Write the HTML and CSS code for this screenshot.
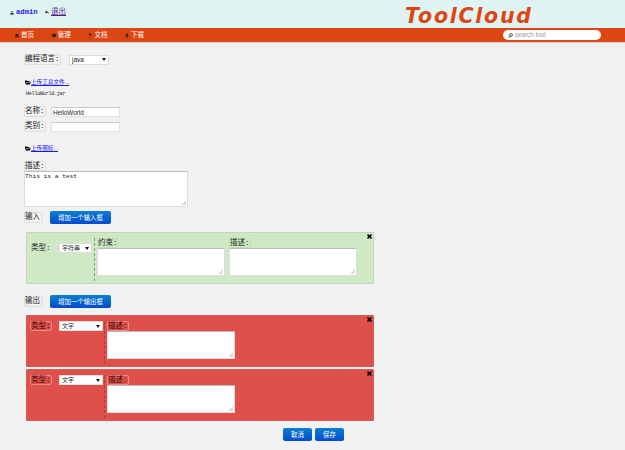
FILE: index.html
```html
<!DOCTYPE html>
<html>
<head>
<meta charset="utf-8">
<title>ToolCloud</title>
<link rel="stylesheet" href="styles.css">
</head>
<body>
<svg class="defs" width="0" height="0">
  <symbol id="folder" viewBox="0 0 12 10"><path d="M0 8V1h4l1 1h4v2H3z M3.5 5H12L9.5 9H1z"/></symbol>
  <symbol id="close" viewBox="0 0 10 10"><path d="M0 2L2 0l3 2.500L8 0l2 2-2.500 3L10 8l-2 2-3-2.500L2 10 0 8l2.500-3z"/></symbol>
</svg>
<header class="top">
  <div class="account">
    <svg class="icon" viewBox="0 0 10 10"><path d="M3 1h4v4l-1 1 4 2v2H0V8l4-2-1-1z M4 2v3l1 1 1-1V2z" fill-rule="evenodd"/></svg>
    <a class="user" href="#">admin</a>
    <svg class="icon back" viewBox="0 0 10 10"><path d="M0 4l4-4v2.500c4 0 6 2 5 7-1-3-2-4-5-4V8z"/></svg>
    <a class="logout" href="#">退出</a>
  </div>
  <div class="brand">ToolCloud</div>
</header>
<nav class="nav">
  <a href="#"><svg class="icon" viewBox="0 0 10 10"><path d="M5 0l5 5H9v5H6V7H4v3H1V5H0z"/></svg>首页</a>
  <a href="#"><svg class="icon" viewBox="0 0 10 10"><path d="M1 1h8v8H1z M0 4h10v2H0z M4 0h2v10H4z"/></svg>管理</a>
  <a href="#"><svg class="icon" viewBox="0 0 10 10"><path d="M1 3c0-4 8-4 8 0 0 2-3 2-3 4H4c0-3 2-2 2-4 0-1-2-1-2 0z M4 8h2v2H4z"/></svg>文档</a>
  <a href="#"><svg class="icon" viewBox="0 0 10 10"><path d="M3 0h4v4h2L5 8 1 4h2z M1 8h8v2H1z"/></svg>下载</a>
  <div class="search">
    <svg viewBox="0 0 10 10"><path d="M5 6L1 9.500" stroke-width="2"/><circle cx="6.200" cy="3.800" r="2.800"/></svg>
    <span>search tool</span>
  </div>
</nav>
<main class="form">
  <div class="row language"><span class="label">编程语言:</span><span class="select">java</span></div>
  <div class="row upload"><svg><use href="#folder"/></svg><a href="#">上传工具文件...</a></div>
  <div class="filename">HelloWorld.jar</div>
  <div class="row field"><span class="label">名称:</span><span class="input">HelloWorld</span></div>
  <div class="row field"><span class="label">类别:</span><span class="input"></span></div>
  <div class="row upload image"><svg><use href="#folder"/></svg><a href="#">上传图标...</a></div>
  <div class="about"><span class="label">描述:</span><div class="textarea">This is a test</div></div>
  <div class="row add"><span class="label">输入</span><span class="button">增加一个输入框</span></div>
  <section class="panel green">
    <div class="type"><span class="label">类型:</span><span class="select">字符串</span></div>
    <div class="part"><span class="label">约束:</span><div class="textarea"></div></div>
    <div class="part"><span class="label">描述:</span><div class="textarea"></div></div>
    <svg class="close"><use href="#close"/></svg>
  </section>
  <div class="row add"><span class="label">输出</span><span class="button">增加一个输出框</span></div>
  <section class="panel red">
    <div class="type"><span class="label">类型:</span><span class="select">文字</span></div>
    <div class="part"><span class="label">描述:</span><div class="textarea"></div></div>
    <svg class="close"><use href="#close"/></svg>
  </section>
  <section class="panel red">
    <div class="type"><span class="label">类型:</span><span class="select">文字</span></div>
    <div class="part"><span class="label">描述:</span><div class="textarea"></div></div>
    <svg class="close"><use href="#close"/></svg>
  </section>
  <div class="actions"><span class="button">取消</span><span class="button">保存</span></div>
</main>
</body>
</html>
```
FILE: styles.css
```css
* { box-sizing: border-box; }
body {
  margin: 0;
  height: 450px;
  overflow: hidden;
  background: #f1f1f1;
  color: #222;
  font: 7.500px/10px "Liberation Sans", "Noto Sans CJK SC", sans-serif;
  white-space: nowrap;
}
.defs { display: block; }
a { color: #1a1aee; }
.top {
  display: flex;
  height: 28px;
  background: #e0f3f3;
}
.account {
  display: flex;
  align-items: center;
  width: 405px;
  padding: 0 0 4px 10px;
}
.icon { width: 4px; height: 5px; fill: #222; }
.user {
  width: 29px;
  margin-left: 2px;
  font: bold 7.200px/10px "Liberation Mono", monospace;
  text-decoration: none;
}
.logout { margin-left: 2px; color: #551a8b; }
.brand {
  padding-top: 4px;
  color: #dc4612;
  font: italic bold 20.500px/24px "DejaVu Sans", sans-serif;
  letter-spacing: 1.750px;
}
.nav {
  display: flex;
  align-items: center;
  height: 14px;
  padding-left: 15px;
  background: #dc4612;
  box-shadow: 0 1px 1px #cfcfcf;
}
.nav a {
  display: flex;
  align-items: center;
  gap: 2px;
  width: 36.700px;
  color: #fff;
  font-size: 6.500px;
  text-decoration: none;
}
.search {
  display: flex;
  align-items: center;
  gap: 2px;
  width: 98px;
  height: 10px;
  margin-left: 341px;
  padding-left: 5px;
  border-radius: 5px;
  background: #fff;
  color: #999;
  font-size: 6.300px;
}
.search svg { width: 5px; height: 5px; fill: none; stroke: #222; stroke-width: 1.500; }
.form { padding: 12px 0 0 24px; }
.row { display: flex; align-items: center; height: 11px; }
.label {
  display: inline-block;
  height: 11px;
  border: 1px solid #dedede;
  border-radius: 2px;
  font-family: "Liberation Mono", "Noto Sans CJK SC", monospace;
  line-height: 9px;
}
.language .label { width: 37px; }
.select {
  display: flex;
  align-items: center;
  justify-content: space-between;
  height: 10px;
  padding: 0 2px;
  border: 1px solid #ddd;
  background: #fff;
  font-size: 6px;
  line-height: 8px;
}
.select::after {
  content: "";
  border: 2px solid transparent;
  border-top: 3px solid #111;
  border-bottom: 0;
}
.language .select { width: 40px; margin-left: 8px; font-size: 6.500px; }
.upload { height: 10px; margin-top: 12px; font-size: 5.600px; }
.upload svg { width: 6px; height: 5px; margin: 0 0 0 1px; }
.filename {
  margin: 2px 0 7px 2px;
  font: 5px/10px "Liberation Mono", monospace;
  letter-spacing: -0.200px;
}
.field { margin-bottom: 4px; }
.field .label { width: 22px; }
.input {
  width: 69px;
  height: 10px;
  margin-left: 5px;
  padding-left: 1px;
  border: 1px solid #e0e0e0;
  border-top-color: #c9c9c9;
  background: #fff;
  font-size: 6.300px;
  line-height: 9px;
}
.image { margin-top: 11px; }
.about { height: 46px; margin-top: 8px; }
.about .label { display: block; width: 22px; height: 10px; line-height: 8px; }
.textarea {
  position: relative;
  width: 128px;
  height: 28px;
  border: 1px solid #ddd;
  border-top-color: #bbb;
  background: #fff;
}
.textarea::after {
  content: "";
  position: absolute;
  right: 1px;
  bottom: 1px;
  width: 5px;
  height: 5px;
  background: #ddd;
  clip-path: polygon(100% 0, 100% 100%, 0 100%);
}
.about .textarea {
  width: 164px;
  height: 36px;
  font: 6.200px/9px "Liberation Mono", monospace;
}
.add { height: 13px; margin-top: 4px; }
.add .label { width: 19px; }
.button {
  height: 13px;
  border-radius: 2px;
  background: linear-gradient(#0b80d0, #034bce);
  color: #fff;
  font-size: 6.400px;
  line-height: 13px;
  text-align: center;
}
.add .button { width: 61px; margin-left: 7px; }
.panel {
  position: relative;
  display: flex;
  width: 348px;
  height: 52px;
  margin: 7px 0 0 2px;
  padding: 5px 0 0 3px;
  border: 1px solid #c5d3bf;
  border-radius: 1px;
}
.green { margin: 8px 0 11px 2px; background: #cfe9c4; }
.green .label { border-color: transparent; }
.green .part .label { height: 10px; border-color: #c3dcb9; }
.red { border-color: #d05c55; background: #de5049; }
.red .label { border-color: #ec8a83; color: #3a0c0c; }
.red + .red { margin-top: 2px; }
.type {
  display: flex;
  align-items: flex-start;
  width: 65px;
  height: 43px;
  border-right: 1px dashed #6fa765;
}
.green .type { padding-top: 5px; }
.red .type { width: 75px; border-right-color: #a63d32; }
.type .label { width: 22px; }
.type .select { width: 33px; margin-left: 7px; }
.red .select { width: 44px; }
.part { margin-left: 2px; }
.part + .part { margin-left: 4px; }
.part .label { display: block; width: 22px; height: 11px; }
.red .label { height: 10px; line-height: 8px; }
.close {
  position: absolute;
  top: 1px;
  right: 1px;
  width: 5px;
  height: 5px;
}
.actions {
  display: flex;
  gap: 3px;
  margin: 7px 0 0 259px;
}
.actions .button { width: 29px; }
```
